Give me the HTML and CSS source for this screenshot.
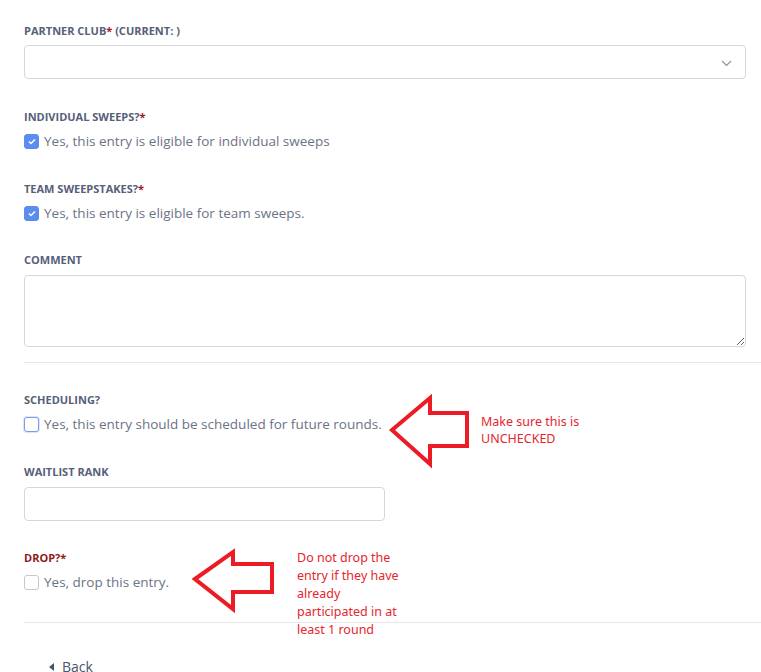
FILE: index.html
```html
<!DOCTYPE html>
<html lang="en">
<head>
    <meta charset="UTF-8">
    <meta name="viewport" content="width=device-width, initial-scale=1.0">
    <title>Edit Entry</title>
    <link rel="stylesheet" href="styles.css">
</head>
<body>
    <div class="container">
        <div class="form-group">
            <label class="field-label">Partner Club<span class="req">*</span> (Current: )</label>
            <div class="select-box">
                <svg class="chevron" width="11" height="7" viewBox="0 0 11 7"><path d="M1 1l4.5 4.5L10 1" fill="none" stroke="#8a93a3" stroke-width="1.2"/></svg>
            </div>
        </div>

        <div class="form-group">
            <label class="field-label">Individual Sweeps?<span class="req">*</span></label>
            <div class="check-row">
                <span class="check checked"><svg width="8" height="7" viewBox="0 0 8 7"><path d="M1 3.5l2 2L7 1.5" fill="none" stroke="#fff" stroke-width="1.5"/></svg></span>
                Yes, this entry is eligible for individual sweeps
            </div>
        </div>

        <div class="form-group team-group">
            <label class="field-label">Team Sweepstakes?<span class="req">*</span></label>
            <div class="check-row">
                <span class="check checked"><svg width="8" height="7" viewBox="0 0 8 7"><path d="M1 3.5l2 2L7 1.5" fill="none" stroke="#fff" stroke-width="1.5"/></svg></span>
                Yes, this entry is eligible for team sweeps.
            </div>
        </div>

        <div class="form-group last">
            <label class="field-label comment-label">Comment</label>
            <textarea class="text-area"></textarea>
        </div>

        <hr class="divider">

        <div class="form-group note-wrap">
            <label class="field-label">Scheduling?</label>
            <div class="check-row">
                <span class="check focused"></span>
                Yes, this entry should be scheduled for future rounds.
            </div>
            <svg class="arrow arrow-one" width="84" height="76" viewBox="0 0 84 76">
                <polygon points="4,36 42,4 42,19 79,19 79,52 42,52 42,70" fill="none" stroke="#ed1c24" stroke-width="4" stroke-linejoin="miter"/>
            </svg>
            <p class="note note-one">Make sure this is<br>UNCHECKED</p>
        </div>

        <div class="form-group rank-group">
            <label class="field-label rank-label">Waitlist Rank</label>
            <input type="text" class="text-input short">
        </div>

        <div class="form-group note-wrap">
            <label class="field-label drop-label">Drop?*</label>
            <div class="check-row">
                <span class="check"></span>
                Yes, drop this entry.
            </div>
            <svg class="arrow arrow-two" width="86" height="66" viewBox="0 0 86 66">
                <polygon points="4,31 42,4 42,16 81,16 81,44 42,44 42,61" fill="none" stroke="#ed1c24" stroke-width="4" stroke-linejoin="miter"/>
            </svg>
            <p class="note note-two">Do not drop the<br>entry if they have<br>already<br>participated in at<br>least 1 round</p>
        </div>

        <hr class="divider">

        <a class="back-link" href="#"><span class="back-arrow"></span>Back</a>
    </div>
</body>
</html>
```

FILE: styles.css
```css
body {
    margin: 0;
    padding: 0;
    background-color: #fff;
    font-family: "Open Sans", sans-serif;
    color: #6b7385;
}
.container {
    padding: 23px 0 0 24px;
}
.form-group {
    padding-right: 15px;
    margin-bottom: 30px;
}
.form-group.team-group {
    margin-bottom: 29px;
}
.form-group.last {
    margin-bottom: 15px;
}
.form-group.rank-group {
    margin-bottom: 29px;
}
.note-wrap {
    position: relative;
}
.field-label {
    display: block;
    font-size: 11px;
    line-height: 16px;
    font-weight: 700;
    text-transform: uppercase;
    color: #56607a;
    margin-bottom: 6px;
}
.comment-label,
.rank-label {
    margin-bottom: 7px;
}
.req {
    color: #a3191f;
}
.drop-label {
    color: #8e1b1b;
}
.select-box {
    position: relative;
    height: 32px;
    border: 1px solid #d4d7dc;
    border-radius: 4px;
    background-color: #fff;
}
.chevron {
    position: absolute;
    right: 13px;
    top: 14px;
}
.text-area {
    display: block;
    width: 100%;
    height: 72px;
    box-sizing: border-box;
    border: 1px solid #d4d7dc;
    border-radius: 4px;
    resize: vertical;
    margin: 0;
}
.text-input {
    display: block;
    height: 34px;
    box-sizing: border-box;
    border: 1px solid #d4d7dc;
    border-radius: 4px;
    margin: 0;
}
.text-input.short {
    width: 361px;
}
.check-row {
    display: flex;
    align-items: center;
    height: 20px;
    font-size: 13.5px;
    color: #6b7385;
}
.check {
    display: inline-flex;
    align-items: center;
    justify-content: center;
    width: 13px;
    height: 13px;
    border: 1px solid #c3c7ce;
    border-radius: 3px;
    margin-right: 5px;
    background-color: #fff;
}
.check.checked {
    background-color: #5b8def;
    border-color: #5b8def;
}
.check.focused {
    border-color: #7a9ee6;
    box-shadow: 0 0 0 1px #dbe6fb;
}
.divider {
    border: none;
    border-top: 1px solid #e6e8eb;
    margin: 0 0 29px 0;
}
.arrow {
    position: absolute;
}
.arrow-one {
    left: 364px;
    top: 2px;
}
.arrow-two {
    left: 167px;
    top: -2px;
}
.note {
    position: absolute;
    margin: 0;
    font-family: "Noto Sans", sans-serif;
    font-size: 12.5px;
    line-height: 18px;
    color: #e5262e;
}
.note-one {
    left: 457px;
    top: 21px;
    line-height: 17px;
}
.note-two {
    left: 273px;
    top: -1px;
}
.back-link {
    display: inline-flex;
    align-items: center;
    margin-left: 25px;
    margin-top: 5px;
    font-size: 14px;
    color: #4a5468;
    text-decoration: none;
}
.back-arrow {
    width: 0;
    height: 0;
    border-top: 4px solid transparent;
    border-bottom: 4px solid transparent;
    border-right: 5px solid #4a5468;
    margin-right: 8px;
}
```
